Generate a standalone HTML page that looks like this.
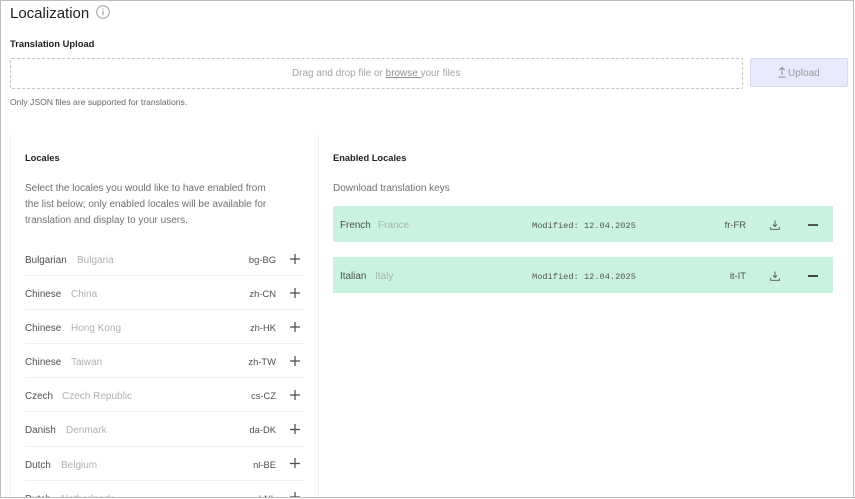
<!DOCTYPE html>
<html><head><meta charset="utf-8">
<style>
html,body{margin:0;padding:0;background:#fff}
#p{position:relative;width:855px;height:499px;overflow:hidden;background:#fff;font-family:"Liberation Sans",sans-serif;color:#555}
.a{position:absolute;white-space:nowrap;line-height:14px}
.s{font-size:9.9px;color:#4f4f4f;margin-top:2px}
.g{font-size:10px;color:#b0b0b0;margin-top:2px}
.c{font-size:9.4px;color:#4f4f4f;text-align:right;width:60px;margin-top:1px}
.l{position:absolute;left:25px;width:279px;height:1px;background:#efefef}
.b{font-size:9.4px;font-weight:bold;color:#222}
.m{font-family:"Liberation Mono",monospace;font-size:8.67px;color:#555;margin-top:1px}
svg{position:absolute;overflow:visible}
</style></head><body><div id="p">
<div style="position:absolute;left:0;top:0;width:852px;height:496px;border:1px solid #bdbdbd"></div>

<div class="a" style="left:10px;top:5px;font-size:15px;line-height:18px;color:#222">Localization</div>
<svg style="left:96px;top:5px" width="14" height="14" viewBox="0 0 14 14" fill="none" stroke="#9a9a9a"><circle cx="7" cy="7" r="6.300"/><path d="M7 6v4.300M7 3.600v1.200" stroke-width="1.100"/></svg>

<div class="a b" style="left:10px;top:37px">Translation Upload</div>
<div style="position:absolute;left:10px;top:58px;width:731px;height:29px;border:1px dashed #c4c4c4;border-radius:2px"></div>
<div class="a" style="left:292px;top:67px;font-size:9.900px;color:#a3a3a3;letter-spacing:.04px">Drag and drop file or <span style="text-decoration:underline;color:#8c8c8c">browse </span>your files</div>
<div style="position:absolute;left:750px;top:58px;width:96px;height:27px;background:#e7e9fc;border:1px solid #d6d9f4;border-radius:2px"></div>
<svg style="left:776.500px;top:66px" width="10" height="12" viewBox="0 0 10 12" fill="none" stroke="#8d8d8d"><path d="M5 9V1.500M2.200 4.200 5 1.400l2.800 2.800M1.500 11h7"/></svg>
<div class="a" style="left:788px;top:66.500px;font-size:10px;color:#9a9a9a">Upload</div>
<div class="a" style="left:10px;top:95px;font-size:8.600px;color:#666">Only JSON files are supported for translations.</div>

<div style="position:absolute;left:10px;top:135px;width:1px;height:364px;background:#f2f2f2"></div>
<div style="position:absolute;left:318px;top:135px;width:1px;height:364px;background:#f0f0f0"></div>

<div class="a b" style="left:25px;top:151px;font-size:9.300px">Locales</div>
<div class="a" style="left:25px;top:180.500px;font-size:10px;line-height:16px;color:#707070">Select the locales you would like to have enabled from<br>the list below; only enabled locales will be available for<br>translation and display to your users.</div>

<div class="a s" style="left:25px;top:252px">Bulgarian</div><div class="a g" style="left:77px;top:252px">Bulgaria</div><div class="a c" style="left:216px;top:252px">bg-BG</div>
<div class="l" style="top:275px"></div>
<div class="a s" style="left:25px;top:286px">Chinese</div><div class="a g" style="left:71px;top:286px">China</div><div class="a c" style="left:216px;top:286px">zh-CN</div>
<div class="l" style="top:309px"></div>
<div class="a s" style="left:25px;top:320px">Chinese</div><div class="a g" style="left:71px;top:320px">Hong Kong</div><div class="a c" style="left:216px;top:320px">zh-HK</div>
<div class="l" style="top:343px"></div>
<div class="a s" style="left:25px;top:354px">Chinese</div><div class="a g" style="left:71px;top:354px">Taiwan</div><div class="a c" style="left:216px;top:354px">zh-TW</div>
<div class="l" style="top:377px"></div>
<div class="a s" style="left:25px;top:388px">Czech</div><div class="a g" style="left:62px;top:388px">Czech Republic</div><div class="a c" style="left:216px;top:388px">cs-CZ</div>
<div class="l" style="top:411px"></div>
<div class="a s" style="left:25px;top:422px">Danish</div><div class="a g" style="left:66px;top:422px">Denmark</div><div class="a c" style="left:216px;top:422px">da-DK</div>
<div class="l" style="top:446px"></div>
<div class="a s" style="left:25px;top:457px">Dutch</div><div class="a g" style="left:61px;top:457px">Belgium</div><div class="a c" style="left:216px;top:457px">nl-BE</div>
<div class="l" style="top:480px"></div>
<div class="a s" style="left:25px;top:491px">Dutch</div><div class="a g" style="left:61px;top:491px">Netherlands</div><div class="a c" style="left:216px;top:491px">nl-NL</div>

<svg style="left:290px;top:254px" width="10" height="240" viewBox="0 0 10 240" fill="none" stroke="#4a4a4a" stroke-width="1.200"><path d="M0 5h10M5 0v10M0 39h10M5 34v10M0 73h10M5 68v10M0 107h10M5 102v10M0 141h10M5 136v10M0 175.500h10M5 170v10M0 209.500h10M5 204v10M0 243h10M5 238v10"/></svg>

<div style="position:absolute;left:0;top:497px;width:855px;height:2px;background:#fff;border-top:1px solid #bdbdbd;box-sizing:border-box"></div>

<div class="a b" style="left:333px;top:151px;font-size:9.300px">Enabled Locales</div>
<div class="a" style="left:333px;top:181.500px;font-size:10px;color:#707070">Download translation keys</div>

<div style="position:absolute;left:333px;top:206px;width:500px;height:36px;background:#c9f3e0"></div>
<div style="position:absolute;left:333px;top:257px;width:500px;height:35.500px;background:#c9f3e0"></div>

<div class="a s" style="left:340px;top:217px">French</div><div class="a" style="left:378px;top:219px;font-size:10px;color:#a5b3ac">France</div>
<div class="a m" style="left:532px;top:218px">Modified: 12.04.2025</div>
<div class="a c" style="left:686px;top:217px">fr-FR</div>
<svg style="left:770px;top:220px" width="10" height="10" viewBox="0 0 10 10" fill="none" stroke="#555" stroke-width=".9"><path d="M5 .5v5.800M3 4.500 5 6.500l2-2M.7 7v2.300h8.600V7"/></svg>
<div style="position:absolute;left:808px;top:224px;width:10px;height:1.500px;background:#555"></div>

<div class="a s" style="left:340px;top:268px">Italian</div><div class="a" style="left:375px;top:270px;font-size:10px;color:#a5b3ac">Italy</div>
<div class="a m" style="left:532px;top:269px">Modified: 12.04.2025</div>
<div class="a c" style="left:686px;top:268px">it-IT</div>
<svg style="left:770px;top:271px" width="10" height="10" viewBox="0 0 10 10" fill="none" stroke="#555" stroke-width=".9"><path d="M5 .5v5.800M3 4.500 5 6.500l2-2M.7 7v2.300h8.600V7"/></svg>
<div style="position:absolute;left:808px;top:275px;width:10px;height:1.500px;background:#444"></div>
</div></body></html>
